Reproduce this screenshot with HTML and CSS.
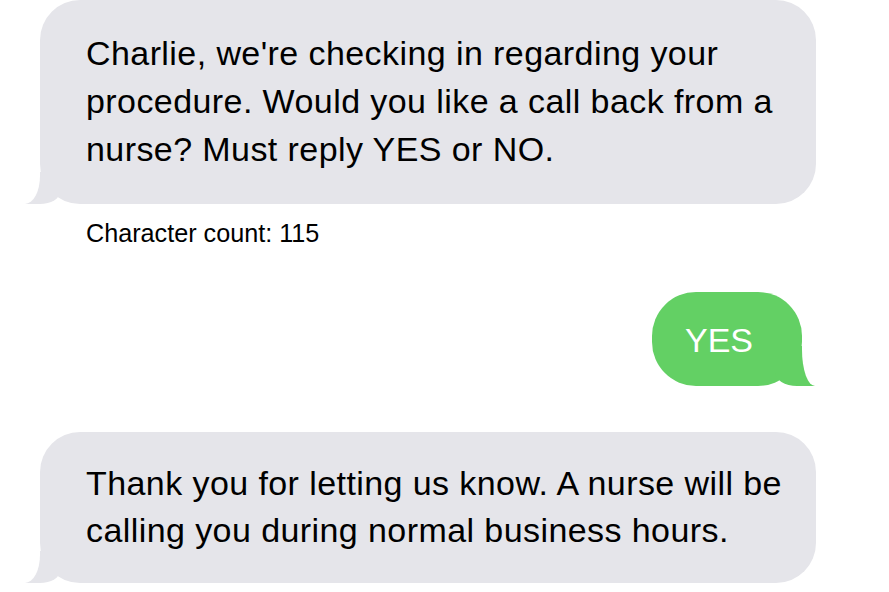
FILE: index.html
```html
<!DOCTYPE html>
<html lang="en">
<head>
<meta charset="utf-8">
<title>Messages</title>
<link rel="stylesheet" href="styles.css">
</head>
<body>
<main class="thread">
  <div class="bubble them first">Charlie, we're checking in regarding your<br>procedure. Would you like a call back from a<br>nurse? Must reply YES or NO.</div>
  <p class="count">Character count: 115</p>
  <div class="bubble me">YES</div>
  <div class="bubble them last">Thank you for letting us know. A nurse will be<br>calling you during normal business hours.</div>
</main>
</body>
</html>
```

FILE: styles.css
```css
html, body {
  margin: 0;
  padding: 0;
  background: #ffffff;
}

body {
  font-family: "Liberation Sans", Arial, sans-serif;
  color: #000000;
  overflow: hidden;
}

.thread {
  width: 776px;
  margin-left: 40px;
  display: flex;
  flex-direction: column;
}

.bubble {
  position: relative;
  box-sizing: border-box;
}

.them {
  background: #e5e5ea;
  border-radius: 40px;
  padding-left: 46px;
  font-size: 34px;
  letter-spacing: 0.42px;
}

.them::before {
  content: "";
  position: absolute;
  bottom: 0;
  left: -15px;
  width: 35px;
  height: 32px;
  background: #e5e5ea;
  border-bottom-right-radius: 20px 12px;
}

.them::after {
  content: "";
  position: absolute;
  bottom: 0;
  left: -40px;
  width: 40px;
  height: 32px;
  background: #ffffff;
  border-bottom-right-radius: 15px 28px;
}

.first {
  line-height: 48px;
  padding-top: 29px;
  padding-bottom: 31px;
}

.last {
  line-height: 47px;
  padding-top: 28px;
  padding-bottom: 29px;
  margin-top: 46px;
}

.count {
  margin: 14px 0 0 46px;
  font-size: 25.2px;
  line-height: 30px;
}

.me {
  align-self: flex-end;
  margin-right: 14px;
  margin-top: 44px;
  width: 150px;
  height: 94px;
  background: #63d064;
  color: #ffffff;
  border-radius: 44px;
  font-size: 34px;
  display: flex;
  align-items: center;
  justify-content: center;
  padding-right: 16px;
  padding-top: 2px;
}

.me::before {
  content: "";
  position: absolute;
  bottom: 0;
  right: -13px;
  width: 40px;
  height: 40px;
  background: #63d064;
  border-bottom-left-radius: 22px 14px;
}

.me::after {
  content: "";
  position: absolute;
  bottom: 0;
  right: -40px;
  width: 40px;
  height: 40px;
  background: #ffffff;
  border-bottom-left-radius: 13px 36px;
}
```
